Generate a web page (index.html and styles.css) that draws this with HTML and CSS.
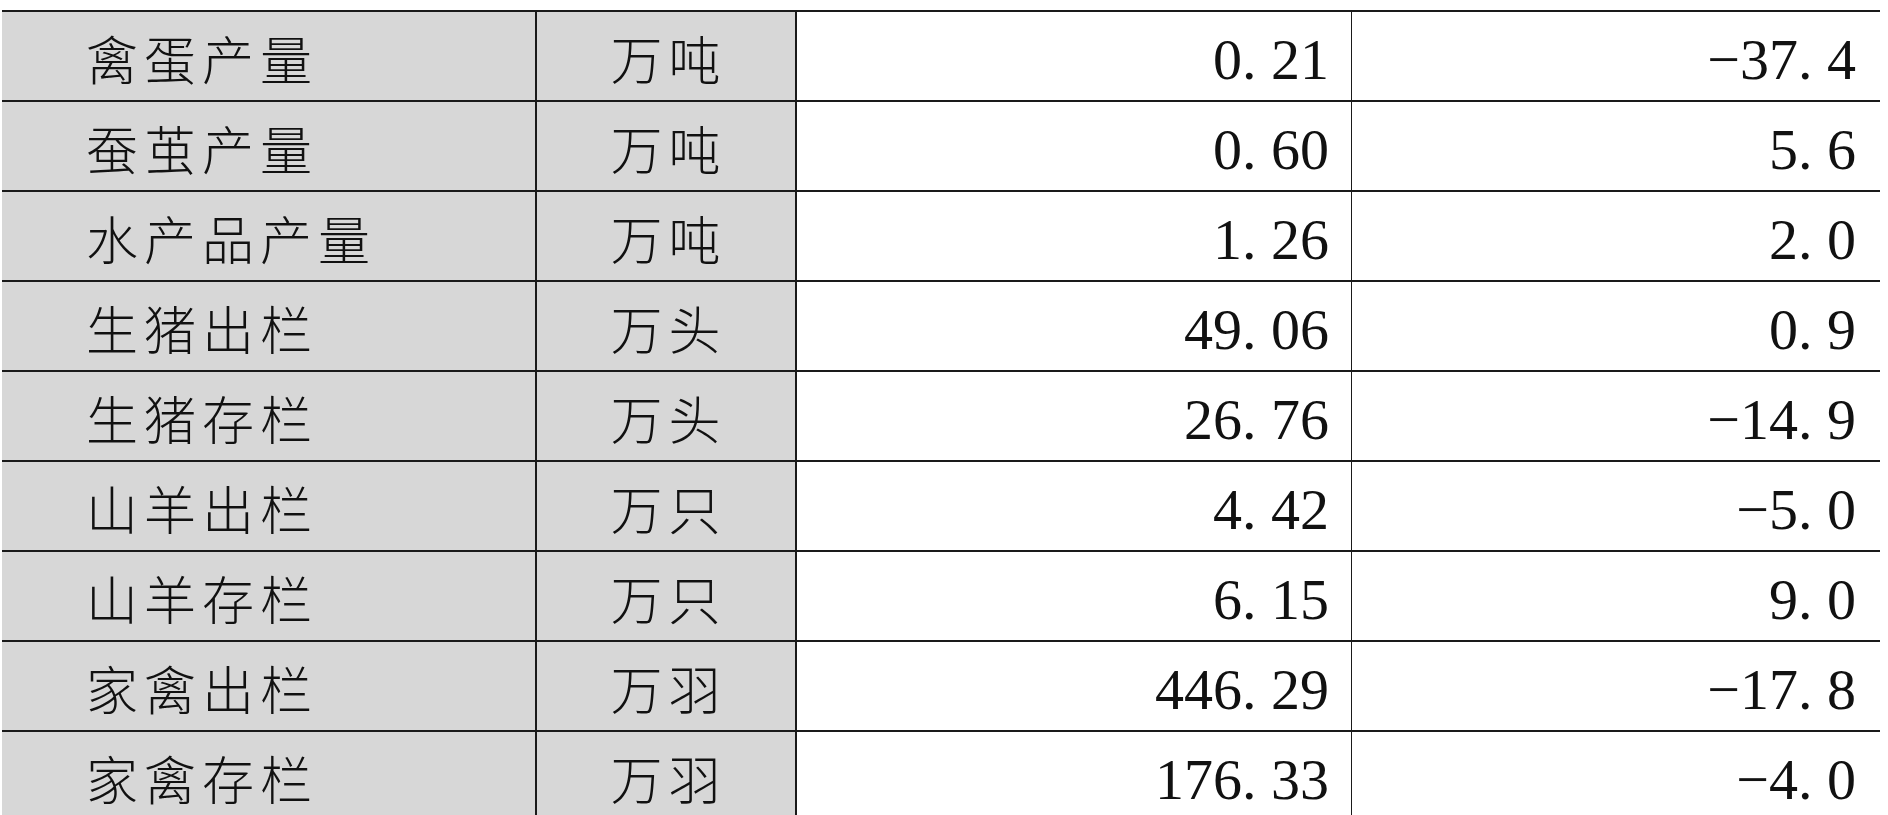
FILE: index.html
```html
<!DOCTYPE html>
<html lang="zh-CN">
<head>
<meta charset="utf-8">
<title>农业生产统计</title>
<link rel="stylesheet" href="styles.css">
</head>
<body>
<table class="stats">
  <colgroup>
    <col class="w-name">
    <col class="w-unit">
    <col class="w-value">
    <col class="w-rate">
  </colgroup>
  <tbody>
    <tr><td class="name">禽蛋产量</td><td class="unit">万吨</td><td class="value">0<span class="dot">.</span>21</td><td class="rate">−37<span class="dot">.</span>4</td></tr>
    <tr><td class="name">蚕茧产量</td><td class="unit">万吨</td><td class="value">0<span class="dot">.</span>60</td><td class="rate">5<span class="dot">.</span>6</td></tr>
    <tr><td class="name">水产品产量</td><td class="unit">万吨</td><td class="value">1<span class="dot">.</span>26</td><td class="rate">2<span class="dot">.</span>0</td></tr>
    <tr><td class="name">生猪出栏</td><td class="unit">万头</td><td class="value">49<span class="dot">.</span>06</td><td class="rate">0<span class="dot">.</span>9</td></tr>
    <tr><td class="name">生猪存栏</td><td class="unit">万头</td><td class="value">26<span class="dot">.</span>76</td><td class="rate">−14<span class="dot">.</span>9</td></tr>
    <tr><td class="name">山羊出栏</td><td class="unit">万只</td><td class="value">4<span class="dot">.</span>42</td><td class="rate">−5<span class="dot">.</span>0</td></tr>
    <tr><td class="name">山羊存栏</td><td class="unit">万只</td><td class="value">6<span class="dot">.</span>15</td><td class="rate">9<span class="dot">.</span>0</td></tr>
    <tr><td class="name">家禽出栏</td><td class="unit">万羽</td><td class="value">446<span class="dot">.</span>29</td><td class="rate">−17<span class="dot">.</span>8</td></tr>
    <tr><td class="name">家禽存栏</td><td class="unit">万羽</td><td class="value">176<span class="dot">.</span>33</td><td class="rate">−4<span class="dot">.</span>0</td></tr>
  </tbody>
</table>
</body>
</html>
```

FILE: styles.css
```css
html, body {
  margin: 0;
  padding: 0;
  background: #ffffff;
}

body {
  padding: 10px 0 0 2px;
  overflow: hidden;
}

.stats {
  border-collapse: separate;
  border-spacing: 0;
  table-layout: fixed;
  width: 1878px;
  color: #111111;
}

.w-name { width: 535px; }
.w-unit { width: 260px; }
.w-value { width: 555px; }
.w-rate { width: 528px; }

.stats td {
  height: 90px;
  padding: 0;
  border-top: 2px solid #1a1a1a;
  box-sizing: border-box;
  vertical-align: middle;
  white-space: nowrap;
}

.stats .name,
.stats .unit {
  background: #d7d7d7;
  font-family: "Noto Sans CJK SC", "Noto Sans CJK JP", sans-serif;
  font-weight: 300;
  font-size: 52px;
  letter-spacing: 6px;
  line-height: 1;
  padding-top: 4px;
}

.stats .name {
  padding-left: 84px;
  border-right: 2px solid #1a1a1a;
}

.stats .unit {
  text-align: center;
  padding-left: 5px;
  border-right: 2px solid #1a1a1a;
}

.stats .value,
.stats .rate {
  font-family: "Liberation Serif", "Times New Roman", serif;
  font-size: 58px;
  line-height: 1;
  text-align: right;
  padding-top: 8px;
}

.stats .value {
  padding-right: 22px;
  border-right: 1px solid #1a1a1a;
}

.stats .rate {
  padding-right: 24px;
}

.dot {
  display: inline-block;
  width: 0.5em;
  text-align: left;
}
```
